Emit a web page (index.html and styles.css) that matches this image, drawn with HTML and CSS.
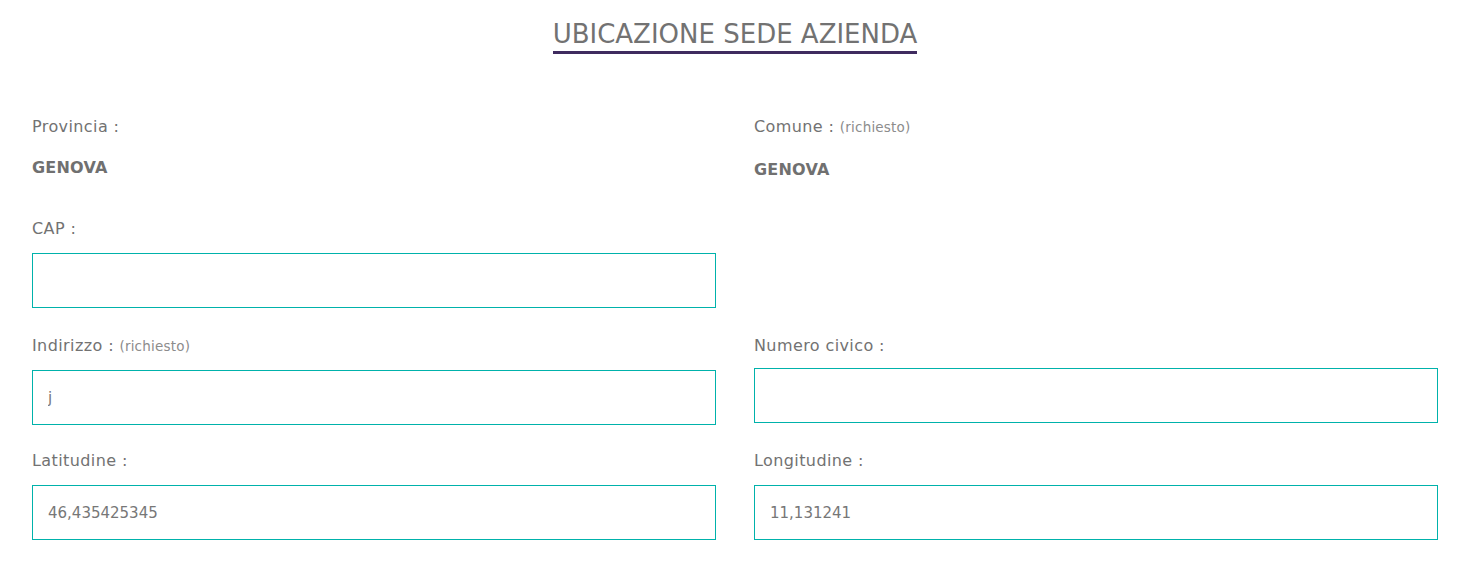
FILE: index.html
```html
<!DOCTYPE html>
<html lang="it">
<head>
<meta charset="utf-8">
<title>Ubicazione sede azienda</title>
<link rel="stylesheet" href="styles.css">
</head>
<body>
<main class="page">
  <h2 class="section-title"><span>UBICAZIONE SEDE AZIENDA</span></h2>
  <div class="form-grid">
    <div class="field field-static">
      <div class="label">Provincia :</div>
      <div class="value">GENOVA</div>
    </div>
    <div class="field field-static">
      <div class="label">Comune : <small>(richiesto)</small></div>
      <div class="value value-low">GENOVA</div>
    </div>

    <div class="field field-cap">
      <label class="label" for="cap">CAP :</label>
      <input class="input" id="cap" type="text" value="">
    </div>
    <div class="field"></div>

    <div class="field">
      <label class="label" for="indirizzo">Indirizzo : <small>(richiesto)</small></label>
      <input class="input" id="indirizzo" type="text" value="j">
    </div>
    <div class="field">
      <label class="label label-tight" for="civico">Numero civico :</label>
      <input class="input" id="civico" type="text" value="">
    </div>

    <div class="field">
      <label class="label" for="lat">Latitudine :</label>
      <input class="input" id="lat" type="text" value="46,435425345">
    </div>
    <div class="field">
      <label class="label" for="lon">Longitudine :</label>
      <input class="input" id="lon" type="text" value="11,131241">
    </div>
  </div>
</main>
</body>
</html>
```

FILE: styles.css
```css
* { box-sizing: border-box; }

html, body {
  margin: 0;
  padding: 0;
  background: #ffffff;
}

body {
  font-family: "DejaVu Sans", "Liberation Sans", sans-serif;
  color: #727272;
}

.page {
  padding: 19px 28px 0 32px;
}

.section-title {
  margin: 0;
  text-align: center;
  font-size: 26px;
  line-height: 30px;
  font-weight: 400;
  color: #727272;
}

.section-title span {
  display: inline-block;
  padding-bottom: 2px;
  border-bottom: 3px solid #3f2b5f;
}

.form-grid {
  margin-top: 62px;
  display: grid;
  grid-template-columns: 1fr 1fr;
  column-gap: 38px;
  row-gap: 25px;
}

.field {
  display: flex;
  flex-direction: column;
  align-items: stretch;
}

.field-static {
  padding-bottom: 12px;
}

.field-cap {
  padding-bottom: 2px;
}

.label {
  display: block;
  font-size: 16px;
  line-height: 22px;
  letter-spacing: 0.4px;
  color: #727272;
  margin-bottom: 13px;
}

.label-tight {
  margin-bottom: 11px;
}

.label small {
  font-size: 13.5px;
  letter-spacing: 0.2px;
  color: #8c8c8c;
}

.field-static .label {
  margin-bottom: 19px;
}

.value {
  font-size: 16px;
  line-height: 22px;
  font-weight: 700;
  letter-spacing: 0.2px;
  color: #707070;
}

.value-low {
  margin-top: 2px;
}

.input {
  display: block;
  width: 100%;
  height: 55px;
  margin: 0;
  padding: 0 15px;
  border: 1px solid #00b2ab;
  border-radius: 0;
  background: #ffffff;
  font-family: "DejaVu Sans", "Liberation Sans", sans-serif;
  font-size: 15px;
  color: #777777;
  outline: none;
}
```
